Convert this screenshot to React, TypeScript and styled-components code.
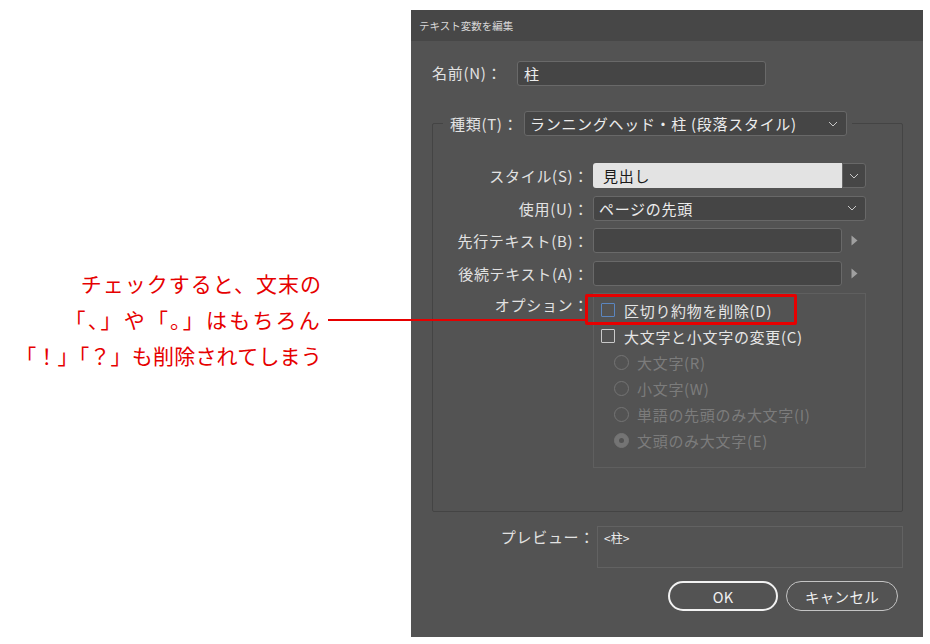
import React from "react"
import styled, { createGlobalStyle } from "styled-components"

const GlobalStyle = createGlobalStyle`
    html, body {
        margin: 0;
        padding: 0;
        background: #ffffff;
    }
    body {
        font-family: "Noto Sans CJK JP", "Noto Sans", sans-serif;
    }
`

const RED = "#e60000"

const Page = styled.div`
    position: relative;
    display: flex;
    width: 930px;
    height: 644px;
    overflow: hidden;
`

const Annotation = styled.div`
    flex: none;
    width: 411px;
    box-sizing: border-box;
    padding: 265px 89px 0 0;
    display: flex;
    flex-direction: column;
    align-items: flex-end;
    color: ${RED};
    font-size: 21px;
    line-height: 36px;
`

const AnnotationLine = styled.div<{ $spacing: number }>`
    letter-spacing: ${p => p.$spacing}px;
    white-space: nowrap;
`

const Leader = styled.div`
    position: absolute;
    left: 328px;
    top: 319px;
    width: 258px;
    height: 2px;
    background: ${RED};
`

const Dialog = styled.div`
    flex: none;
    margin-top: 10px;
    width: 512px;
    height: 627px;
    background: #535353;
    color: #e2e2e2;
    display: flex;
    flex-direction: column;
`

const TitleBar = styled.div`
    height: 31px;
    background: #474747;
    padding-left: 8px;
    font-size: 10.5px;
    line-height: 31px;
    color: #d8d8d8;
`

const Body = styled.div`
    display: flex;
    flex-direction: column;
    padding: 20px 20px 0 21px;
    font-size: 15px;
    letter-spacing: 0.7px;
`

const NameRow = styled.div`
    display: flex;
    align-items: center;
    height: 24px;
`

const NameLabel = styled.span`
    width: 85px;
    line-height: 24px;
`

const Input = styled.div<{ $width: number }>`
    box-sizing: border-box;
    width: ${p => p.$width}px;
    height: 25px;
    background: #454545;
    border: 1px solid #696969;
    border-radius: 3px;
    padding-left: 6px;
    font-size: 15px;
    line-height: 23px;
    color: #ececec;
`

const Group = styled.fieldset`
    margin: 26px 0 0 0;
    padding: 0 0 43px 0;
    border: 1px solid #444444;
    border-radius: 2px;
    min-width: 0;
`

const Legend = styled.legend`
    margin-left: 10px;
    padding: 0 5px;
    display: flex;
    align-items: center;
    line-height: 25px;
`

const LegendLabel = styled.span`
    width: 74px;
    padding-left: 2px;
    white-space: nowrap;
`

const Select = styled.div<{ $width: number }>`
    box-sizing: border-box;
    display: flex;
    align-items: center;
    width: ${p => p.$width}px;
    height: 25px;
    background: #454545;
    border: 1px solid #686868;
    border-radius: 3px;
    padding: 0 8px 0 5px;
    color: #ececec;
    font-size: 15px;
`

const SelectText = styled.span`
    flex: 1;
    line-height: 23px;
    white-space: nowrap;
`

const Form = styled.div`
    display: grid;
    grid-template-columns: 156px 273px;
    column-gap: 4px;
    row-gap: 7.6px;
    margin-top: 27px;
`

const Label = styled.div<{ $top?: boolean }>`
    text-align: right;
    line-height: ${p => (p.$top ? "22px" : "25px")};
    align-self: ${p => (p.$top ? "start" : "center")};
    padding-top: ${p => (p.$top ? "1px" : "0")};
    white-space: nowrap;
`

const Combo = styled.div`
    display: flex;
    height: 25px;
`

const ComboField = styled.div`
    flex: 1;
    background: #e3e3e3;
    border-radius: 3px 0 0 3px;
    color: #1a1a1a;
    padding-left: 10px;
    line-height: 25px;
`

const ComboButton = styled.div`
    box-sizing: border-box;
    width: 24px;
    display: flex;
    align-items: center;
    justify-content: center;
    background: #464646;
    border: 1px solid #686868;
    border-radius: 0 3px 3px 0;
`

const ArrowField = styled.div`
    display: flex;
    align-items: center;
    gap: 9px;
`

const Options = styled.div`
    box-sizing: border-box;
    height: 175px;
    border: 1px solid #5f5f5f;
    padding: 3px 0 0 7px;
    display: flex;
    flex-direction: column;
`

const OptionRow = styled.div<{ $indent?: boolean; $disabled?: boolean }>`
    position: relative;
    display: flex;
    align-items: center;
    height: 26px;
    padding-left: ${p => (p.$indent ? "13px" : "0")};
    color: ${p => (p.$disabled ? "#7c7c7c" : "#e6e6e6")};
    white-space: nowrap;
`

const Checkbox = styled.span<{ $focus?: boolean }>`
    box-sizing: border-box;
    width: 14px;
    height: 14px;
    margin-right: 9px;
    border: 1px solid ${p => (p.$focus ? "#5b86c0" : "#c9c9c9")};
    border-radius: 1px;
`

const Radio = styled.span<{ $checked?: boolean }>`
    box-sizing: border-box;
    width: 15px;
    height: 15px;
    margin-right: 8px;
    border: 1.5px solid #747474;
    border-radius: 50%;
    display: flex;
    align-items: center;
    justify-content: center;
    background: ${p => (p.$checked ? "#747474" : "transparent")};
    &::after {
        content: "";
        width: 5px;
        height: 5px;
        border-radius: 50%;
        background: ${p => (p.$checked ? "#535353" : "transparent")};
    }
`

const Highlight = styled.div`
    position: absolute;
    left: -16px;
    top: -3px;
    width: 212px;
    height: 31px;
    box-sizing: border-box;
    border: 3px solid ${RED};
    border-radius: 2px;
`

const PreviewRow = styled.div`
    display: flex;
    margin-top: 14px;
`

const PreviewLabel = styled.div`
    width: 163px;
    text-align: right;
    line-height: 22px;
    margin-right: 2px;
`

const PreviewBox = styled.div`
    box-sizing: border-box;
    width: 306px;
    height: 42px;
    border: 1px solid #626262;
    padding: 3px 0 0 6px;
    font-size: 12px;
    line-height: 16px;
    letter-spacing: 0;
    color: #ececec;
`

const Buttons = styled.div`
    display: flex;
    justify-content: flex-end;
    gap: 8px;
    margin: 13px 5px 0 0;
`

const Button = styled.div<{ $primary?: boolean }>`
    box-sizing: border-box;
    width: ${p => (p.$primary ? "110px" : "112px")};
    height: 30px;
    border: ${p => (p.$primary ? "2px solid #f2f2f2" : "1px solid #c4c4c4")};
    border-radius: 15px;
    display: flex;
    align-items: center;
    justify-content: center;
    font-size: 14.5px;
    letter-spacing: 0.3px;
    color: #f0f0f0;
`

const Chevron = () => (
    <svg width={10} height={6} viewBox="0 0 10 6">
        <path d="M1 1 L5 5 L9 1" fill="none" stroke="#c8c8c8" strokeWidth={1} />
    </svg>
)

const Triangle = () => (
    <svg width={7} height={11} viewBox="0 0 7 11">
        <path d="M0.5 0.5 L6.5 5.5 L0.5 10.5 Z" fill="#a0a0a0" />
    </svg>
)

const radios = [
    { label: "大文字(R)", checked: false },
    { label: "小文字(W)", checked: false },
    { label: "単語の先頭のみ大文字(I)", checked: false },
    { label: "文頭のみ大文字(E)", checked: true }
]

export default function App() {
    return (
        <Page>
            <GlobalStyle />
            <Annotation>
                <AnnotationLine $spacing={1}>チェックすると、文末の</AnnotationLine>
                <AnnotationLine $spacing={2.2}>「、」や「。」はもちろん</AnnotationLine>
                <AnnotationLine $spacing={0.2}>「！」「？」も削除されてしまう</AnnotationLine>
            </Annotation>
            <Leader />
            <Dialog>
                <TitleBar>テキスト変数を編集</TitleBar>
                <Body>
                    <NameRow>
                        <NameLabel>名前(N)：</NameLabel>
                        <Input $width={249}>柱</Input>
                    </NameRow>
                    <Group>
                        <Legend>
                            <LegendLabel>種類(T)：</LegendLabel>
                            <Select $width={323}>
                                <SelectText>ランニングヘッド・柱 (段落スタイル)</SelectText>
                                <Chevron />
                            </Select>
                        </Legend>
                        <Form>
                            <Label>スタイル(S)：</Label>
                            <Combo>
                                <ComboField>見出し</ComboField>
                                <ComboButton>
                                    <Chevron />
                                </ComboButton>
                            </Combo>

                            <Label>使用(U)：</Label>
                            <Select $width={273}>
                                <SelectText>ページの先頭</SelectText>
                                <Chevron />
                            </Select>

                            <Label>先行テキスト(B)：</Label>
                            <ArrowField>
                                <Input $width={249} />
                                <Triangle />
                            </ArrowField>

                            <Label>後続テキスト(A)：</Label>
                            <ArrowField>
                                <Input $width={249} />
                                <Triangle />
                            </ArrowField>

                            <Label $top>オプション：</Label>
                            <Options>
                                <OptionRow>
                                    <Checkbox $focus />
                                    区切り約物を削除(D)
                                    <Highlight />
                                </OptionRow>
                                <OptionRow>
                                    <Checkbox />
                                    大文字と小文字の変更(C)
                                </OptionRow>
                                {radios.map(r => (
                                    <OptionRow key={r.label} $indent $disabled>
                                        <Radio $checked={r.checked} />
                                        {r.label}
                                    </OptionRow>
                                ))}
                            </Options>
                        </Form>
                    </Group>
                    <PreviewRow>
                        <PreviewLabel>プレビュー：</PreviewLabel>
                        <PreviewBox>&lt;柱&gt;</PreviewBox>
                    </PreviewRow>
                    <Buttons>
                        <Button $primary>OK</Button>
                        <Button>キャンセル</Button>
                    </Buttons>
                </Body>
            </Dialog>
        </Page>
    )
}
